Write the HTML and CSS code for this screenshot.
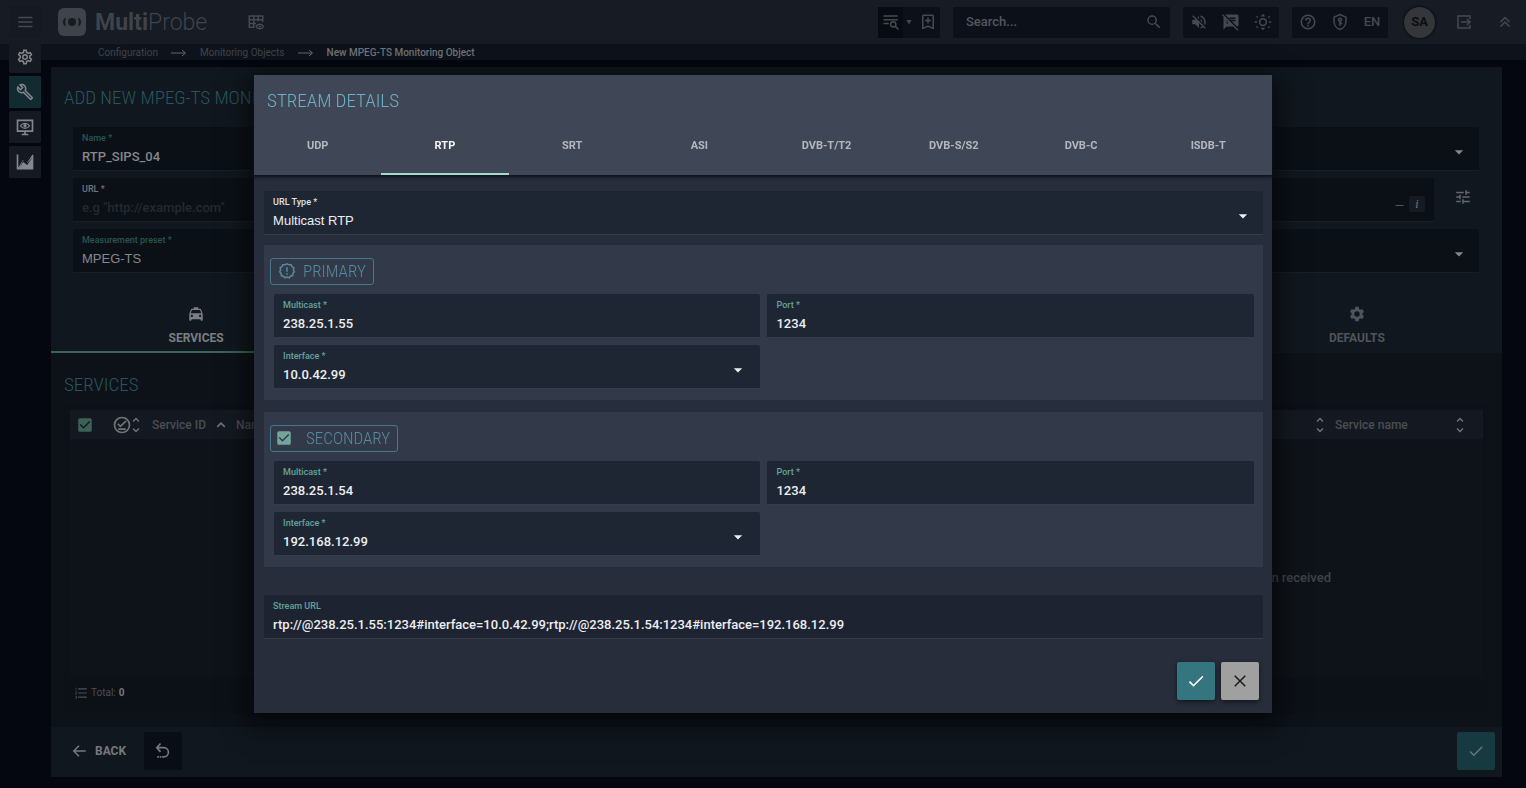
FILE: index.html
```html
<!DOCTYPE html>
<html lang="en">
<head>
<meta charset="utf-8">
<title>MultiProbe</title>
<link rel="stylesheet" href="styles.css">
</head>
<body>
<svg class="defs" aria-hidden="true">
  <symbol id="check" viewBox="0 0 24 24"><path d="M9 16.17 4.83 12l-1.42 1.41L9 19 21 7l-1.41-1.41z"/></symbol>
  <symbol id="checkbox" viewBox="0 0 24 24"><path d="M19 3H5a2 2 0 0 0-2 2v14a2 2 0 0 0 2 2h14a2 2 0 0 0 2-2V5a2 2 0 0 0-2-2zm-9 14-5-5 1.410-1.410L10 14.170l7.590-7.590L19 8l-9 9z"/></symbol>
  <symbol id="caret" viewBox="0 0 24 24"><path d="M7 10l5 5 5-5z"/></symbol>
  <symbol id="sort" viewBox="0 0 24 24"><path d="M12 4.830 15.170 8l1.410-1.410L12 2 7.410 6.590 8.830 8zM12 19.170 8.830 16l-1.410 1.410L12 22l4.590-4.590L15.170 16z"/></symbol>
  <symbol id="arrow" viewBox="0 0 16 8"><path d="M0 4h14M11 1l3.500 3L11 7" fill="none" stroke="currentColor"/></symbol>
</svg>

<header class="topbar">
  <div class="brand">
    <svg class="logo" viewBox="0 0 28 28"><rect width="28" height="28" rx="6"/><g class="logo-mark"><circle cx="14" cy="14" r="4"/><path d="M8 9.500C4 11 4 17 8 18.500C7 15.500 7 12.500 8 9.500zM20 9.500c4 1.500 4 7.500 0 9c1-3 1-6 0-9z"/></g></svg>
    <span class="brand-name"><b>Multi</b>Probe</span>
  </div>
  <button class="icon-btn layout-btn" aria-label="Table view"><svg class="i18" viewBox="0 0 24 24"><g fill="none" stroke="currentColor" stroke-width="2"><path d="M10 19H3V4h18v8M3 9h18M3 14h9M9 4v15M15 4v7"/><path d="M12 18c2-4 8-4 10 0c-2 4-8 4-10 0z"/></g><circle cx="17" cy="18" r="1.500"/></svg></button>
  <div class="tools">
    <div class="group filters">
      <button class="icon-btn dark" aria-label="Find in list"><svg class="i18" viewBox="0 0 24 24"><g fill="none" stroke="currentColor" stroke-width="2"><path d="M2 4h19M2 9h19M2 14h7"/><circle cx="15" cy="15" r="3.500"/><path d="M17.500 17.500 22 22"/></g></svg></button>
      <svg class="i14" viewBox="0 0 24 24"><path d="M7 8h10l-5 9z"/></svg>
      <button class="icon-btn" aria-label="Add bookmark"><svg class="i18" viewBox="0 0 24 24"><path d="M18 2H6a2 2 0 0 0-2 2v18l8-3.500 8 3.500V4a2 2 0 0 0-2-2zm0 17-6-2.600L6 19V4h12zM11 6h2v3h3v2h-3v3h-2v-3H8V9h3z"/></svg></button>
    </div>
    <label class="group search"><input type="text" placeholder="Search..." aria-label="Search"><svg class="i18" viewBox="0 0 24 24"><path d="M15.500 14h-.790l-.280-.270A6.470 6.470 0 0 0 16 9.500 6.500 6.500 0 1 0 9.500 16c1.610 0 3.090-.590 4.230-1.570l.270.280v.790l5 4.990L20.490 19l-4.990-5zm-6 0a4.500 4.500 0 1 1 0-9 4.500 4.500 0 0 1 0 9z"/></svg></label>
    <div class="group trio">
      <button class="icon-btn" aria-label="Mute"><svg class="i18" viewBox="0 0 24 24"><path d="M16.5 12c0-1.77-1.02-3.29-2.5-4.03v2.21l2.45 2.45c.03-.2.05-.41.05-.63zm2.5 0c0 .94-.2 1.82-.54 2.64l1.51 1.51C20.63 14.91 21 13.5 21 12c0-4.28-2.99-7.86-7-8.77v2.06c2.89.86 5 3.54 5 6.71zM4.27 3L3 4.27 7.73 9H3v6h4l5 5v-6.73l4.25 4.25c-.67.52-1.42.93-2.25 1.18v2.06c1.38-.31 2.63-.95 3.69-1.81L19.73 21 21 19.73l-9-9L4.27 3zM12 4L9.91 6.09 12 8.18V4z"/></svg></button>
      <button class="icon-btn" aria-label="Hide messages"><svg class="i18" viewBox="0 0 24 24"><path d="M10.54 11l-.54-.54L7.54 8 6 6.46 2.38 2.84 1.27 1.73 0 3l2.01 2.01L2 22l4-4h9l5.73 5.73L22 22.46 17.54 18l-7-7zM8 14H6v-2h2v2zm-2-3V9l2 2H6zm14-9H4.08L10 7.92V6h8v2h-7.92l1 1H18v2h-4.92l6.99 6.99C21.14 17.95 22 17.08 22 16V4c0-1.1-.9-2-2-2z"/></svg></button>
      <button class="icon-btn" aria-label="Brightness"><svg class="i18" viewBox="0 0 24 24"><circle cx="12" cy="12" r="4.500" fill="none" stroke="currentColor" stroke-width="2"/><path d="M9 4.500 12 1l3 3.500zM9 19.500l3 3.500 3-3.500zM2 5l3-1v3zM22 5l-3-1v3zM2 19l3 1v-3zM22 19l-3 1v-3zM1 11h3v2H1zM20 11h3v2h-3z"/></svg></button>
    </div>
    <div class="group trio">
      <button class="icon-btn" aria-label="Help"><svg class="i18" viewBox="0 0 24 24"><path d="M11 18h2v-2h-2zm1-16a10 10 0 1 0 0 20 10 10 0 0 0 0-20zm0 18a8 8 0 1 1 0-16 8 8 0 0 1 0 16zm0-14a4 4 0 0 0-4 4h2a2 2 0 1 1 4 0c0 2-3 1.750-3 5h2c0-2.250 3-2.500 3-5a4 4 0 0 0-4-4z"/></svg></button>
      <button class="icon-btn" aria-label="Security"><svg class="i18" viewBox="0 0 24 24"><g fill="none" stroke="currentColor" stroke-width="2"><path d="M12 2 4 5.500V11c0 5 3.500 9.500 8 11c4.500-1.500 8-6 8-11V5.500z"/><circle cx="12" cy="9" r="2"/><path d="M12 11v6M12 14h3"/></g></svg></button>
      <button class="icon-btn lang">EN</button>
    </div>
    <button class="avatar">SA</button>
    <button class="icon-btn" aria-label="Log out"><svg class="i18" viewBox="0 0 24 24"><g fill="none" stroke="currentColor" stroke-width="2"><path d="M20 8V4H4v16h16v-4M8 12h12M16 8l4 4-4 4"/></g></svg></button>
    <button class="icon-btn" aria-label="Collapse"><svg class="i18" viewBox="0 0 24 24"><path d="m6 12 6-6 6 6M6 18l6-6 6 6" fill="none" stroke="currentColor" stroke-width="2"/></svg></button>
  </div>
</header>

<nav class="crumbs" aria-label="Breadcrumb">
  <a href="#">Configuration</a><svg><use href="#arrow"/></svg>
  <a href="#">Monitoring Objects</a><svg><use href="#arrow"/></svg>
  <span class="current">New MPEG-TS Monitoring Object</span>
</nav>

<nav class="rail" aria-label="Main">
  <button class="menu" aria-label="Menu"><svg class="i18" viewBox="0 0 24 24"><path d="M3 5h19v2H3zM3 11h19v2H3zM3 17h19v2H3z"/></svg></button>
  <button aria-label="Settings"><svg class="i18" viewBox="0 0 24 24"><path d="M12,8A4,4 0 0,1 16,12A4,4 0 0,1 12,16A4,4 0 0,1 8,12A4,4 0 0,1 12,8M12,10A2,2 0 0,0 10,12A2,2 0 0,0 12,14A2,2 0 0,0 14,12A2,2 0 0,0 12,10M10,22C9.75,22 9.54,21.82 9.5,21.58L9.13,18.93C8.5,18.68 7.96,18.34 7.44,17.94L4.95,18.95C4.73,19.03 4.46,18.95 4.34,18.73L2.34,15.27C2.21,15.05 2.27,14.78 2.46,14.63L4.57,12.97L4.5,12L4.57,11L2.46,9.37C2.27,9.22 2.21,8.95 2.34,8.73L4.34,5.27C4.46,5.05 4.73,4.96 4.95,5.05L7.44,6.05C7.96,5.66 8.5,5.32 9.13,5.07L9.5,2.42C9.54,2.18 9.75,2 10,2H14C14.25,2 14.46,2.18 14.5,2.42L14.87,5.07C15.5,5.32 16.04,5.66 16.56,6.05L19.05,5.05C19.27,4.96 19.54,5.05 19.66,5.27L21.66,8.73C21.79,8.95 21.73,9.22 21.54,9.37L19.43,11L19.5,12L19.43,13L21.54,14.63C21.73,14.78 21.79,15.05 21.66,15.27L19.66,18.73C19.54,18.95 19.27,19.04 19.05,18.95L16.56,17.95C16.04,18.34 15.5,18.68 14.87,18.93L14.5,21.58C14.46,21.82 14.25,22 14,22H10M11.25,4L10.88,6.61C9.68,6.86 8.62,7.5 7.85,8.39L5.44,7.35L4.69,8.65L6.8,10.2C6.4,11.37 6.4,12.64 6.8,13.8L4.68,15.36L5.43,16.66L7.86,15.62C8.63,16.5 9.68,17.14 10.87,17.38L11.24,20H12.76L13.13,17.39C14.32,17.14 15.37,16.5 16.14,15.62L18.57,16.66L19.32,15.36L17.2,13.81C17.6,12.64 17.6,11.37 17.2,10.2L19.31,8.65L18.56,7.35L16.15,8.39C15.38,7.5 14.32,6.86 13.12,6.62L12.75,4H11.25Z"/></svg></button>
  <button class="active" aria-label="Configuration"><svg class="i18" viewBox="0 0 24 24"><path d="M22.61 18.99l-9.08-9.08c.93-2.34.45-5.1-1.44-7C9.79.61 6.21.4 3.66 2.26L7.5 6.11 6.08 7.52 2.25 3.69C.39 6.23.6 9.82 2.9 12.11c1.86 1.86 4.57 2.35 6.89 1.48l9.11 9.11c.39.39 1.02.39 1.41 0l2.3-2.3c.4-.38.4-1.01 0-1.41zm-3 1.6l-9.46-9.46c-.61.45-1.29.72-2 .82-1.36.2-2.79-.21-3.83-1.25C3.37 9.76 2.93 8.5 3 7.26l3.09 3.09 4.24-4.24-3.09-3.09c1.24-.07 2.49.37 3.44 1.31 1.08 1.08 1.49 2.57 1.24 3.96-.12.71-.42 1.37-.88 1.96l9.45 9.45-.88.89z"/></svg></button>
  <button aria-label="Monitoring"><svg class="i20" viewBox="0 0 24 24"><g fill="none" stroke="currentColor" stroke-width="2"><path d="M3 4h18v13H3zM12 17v4M8 21h8"/><path d="M6.500 10.500c2.500-4 8.500-4 11 0c-2.500 4-8.500 4-11 0z" stroke-width="1.500"/></g><circle cx="12" cy="10.500" r="2"/></svg></button>
  <button aria-label="Charts"><svg class="i20" viewBox="0 0 24 24"><path d="M2 3h2v15.500l5.500-9 5 3.500L21 3l1 .500V21H2z M5 19.500 9.800 12l5 3.500L20.500 7v-.500L15 13.300l-5-3.500z" fill-rule="evenodd"/></svg></button>
</nav>

<main class="panel">
  <section class="object">
    <h1>ADD NEW MPEG-TS MONI</h1>
    <div class="rows">
      <div class="row">
        <label class="field"><span>Name *</span><input type="text" value="RTP_SIPS_04"></label>
        <label class="field"><select aria-label="Group"><option></option></select><svg class="dd"><use href="#caret"/></svg></label>
      </div>
      <div class="row url-row">
        <label class="field url"><span>URL *</span><input type="text" placeholder='e.g "http://example.com"'><b class="dash">—</b><i class="info">i</i></label>
        <button class="icon-btn tune" aria-label="Stream options"><svg class="i18" viewBox="0 0 24 24"><path d="M3 17v2h6v-2H3zM3 5v2h10V5H3zm10 16v-2h8v-2h-8v-2h-2v6h2zM7 9v2H3v2h4v2h2V9H7zm14 4v-2H11v2h10zm-6-4h2V7h4V5h-4V3h-2v6z"/></svg></button>
      </div>
      <div class="row">
        <label class="field arial"><span>Measurement preset *</span><select><option>MPEG-TS</option></select></label>
        <label class="field"><select aria-label="Secondary preset"><option></option></select><svg class="dd"><use href="#caret"/></svg></label>
      </div>
    </div>
    <div class="object-tabs">
      <button class="active"><svg class="i18" viewBox="0 0 24 24"><path d="M18.92 6.01C18.72 5.42 18.16 5 17.5 5H15V3H9v2H6.500c-.66 0-1.21.42-1.42 1.01L3 12v8c0 .55.45 1 1 1h1c.55 0 1-.45 1-1v-1h12v1c0 .55.45 1 1 1h1c.55 0 1-.45 1-1v-8l-2.08-5.99zM6.5 16c-.83 0-1.5-.67-1.5-1.5S5.67 13 6.5 13s1.5.67 1.5 1.5S7.33 16 6.5 16zm11 0c-.83 0-1.5-.67-1.5-1.5s.67-1.5 1.5-1.5 1.5.67 1.5 1.5-.67 1.500-1.500 1.500zM5 11l1.500-4.500h11L19 11H5z"/></svg>SERVICES</button>
      <button class="last"><svg class="i18" viewBox="0 0 24 24"><path d="M19.14 12.94c.04-.3.06-.61.06-.94 0-.32-.02-.64-.07-.94l2.03-1.58a.49.49 0 0 0 .12-.61l-1.92-3.32a.488.488 0 0 0-.59-.22l-2.39.96c-.5-.38-1.03-.7-1.62-.94l-.36-2.54a.484.484 0 0 0-.48-.41h-3.84c-.24 0-.43.17-.47.41l-.36 2.54c-.59.24-1.13.57-1.62.94l-2.39-.96c-.22-.08-.47 0-.59.22L2.740 8.870c-.12.21-.08.47.12.61l2.030 1.580c-.05.3-.09.63-.09.94s.02.64.07.94l-2.030 1.580a.49.49 0 0 0-.12.61l1.920 3.320c.12.22.37.29.59.22l2.390-.96c.5.38 1.030.7 1.620.94l.36 2.540c.05.24.24.41.48.41h3.840c.24 0 .44-.17.47-.41l.36-2.540c.59-.24 1.130-.56 1.620-.94l2.390.96c.22.08.47 0 .59-.22l1.920-3.320c.12-.22.07-.47-.12-.61l-2.010-1.580zM12 15.600A3.600 3.600 0 1 1 12 8.400a3.600 3.600 0 0 1 0 7.200z"/></svg>DEFAULTS</button>
    </div>
  </section>

  <section class="services">
    <h2>SERVICES</h2>
    <div class="table-card">
      <table>
        <thead><tr>
          <th class="c-check"><label class="tick"><input type="checkbox" checked aria-label="Select all"><svg><use href="#checkbox"/></svg></label></th>
          <th class="c-state"><div><svg class="i20" viewBox="0 0 24 24"><g fill="none" stroke="currentColor" stroke-width="2"><circle cx="12" cy="12" r="9"/><path d="m7 10.500 3 3L17 7M7.500 17h9"/></g></svg><svg class="i18"><use href="#sort"/></svg></div></th>
          <th class="c-id"><div>Service ID<svg class="i18" viewBox="0 0 24 24"><path d="m7 14.500 5-5 5 5" fill="none" stroke="currentColor" stroke-width="2"/></svg></div></th>
          <th class="c-title"><div>Name<svg class="i18"><use href="#sort"/></svg></div></th>
          <th class="c-name"><div>Service name<svg class="i18"><use href="#sort"/></svg></div></th>
        </tr></thead>
        <tbody><tr><td colspan="5">n received</td></tr></tbody>
      </table>
      <div class="total"><svg class="i14" viewBox="0 0 24 24"><path d="M7 4h15v2H7zM7 11h15v2H7zM7 18h15v2H7zM2 3h2v5H3V4H2zM2 10h3v1l-2 3h2v1H2v-1l2-3H2zM2 17h3v5H2v-1h2v-1H3v-1h1v-1H2z"/></svg>Total: <b>0</b></div>
    </div>
  </section>

  <footer class="actions">
    <button class="back"><svg class="i18" viewBox="0 0 24 24"><path d="M21 12H5M12 5l-7 7 7 7" fill="none" stroke="currentColor" stroke-width="2"/></svg>BACK</button>
    <button class="square undo" aria-label="Undo"><svg class="i20" viewBox="0 0 24 24"><path d="M5 8h8a5.500 5.500 0 0 1 0 11h-2M9 3 4.500 8 9 13" fill="none" stroke="currentColor" stroke-width="2"/><path d="M5 18h2v2H5zM8 18h2v2H8z"/></svg></button>
    <button class="square save" aria-label="Save"><svg class="i18"><use href="#check"/></svg></button>
  </footer>
</main>

<div class="overlay">
  <form class="dialog" role="dialog" aria-labelledby="dialog-title">
    <header>
      <h2 id="dialog-title">STREAM DETAILS</h2>
      <div class="tabs">
        <button type="button">UDP</button><button type="button" class="active">RTP</button><button type="button">SRT</button><button type="button">ASI</button><button type="button">DVB-T/T2</button><button type="button">DVB-S/S2</button><button type="button">DVB-C</button><button type="button">ISDB-T</button>
      </div>
    </header>
    <div class="content">
      <label class="field arial plain"><span>URL Type *</span><select><option>Multicast RTP</option></select><svg class="dd"><use href="#caret"/></svg></label>
      <section class="source">
        <h3><svg class="i18" viewBox="0 0 24 24"><path d="m12 2.500 3 1.300 2.500-.2 1.200 2.700 2.400 1.500-.6 2.900 1.300 2.300-2 2.200-.2 2.900-2.900.8-1.800 2.100-2.900-1-2.900 1-1.800-2.100-2.900-.8-.2-2.900-2-2.200 1.300-2.300-.6-2.900 2.400-1.500 1.200-2.700 2.500.2z" fill="none" stroke="currentColor" stroke-width="2"/><path d="M11 7h2v6h-2zM11 15h2v2h-2z"/></svg>PRIMARY</h3>
        <div class="grid">
          <label class="field"><span>Multicast *</span><input type="text" value="238.25.1.55"></label>
          <label class="field"><span>Port *</span><input type="text" value="1234"></label>
          <label class="field"><span>Interface *</span><select><option>10.0.42.99</option></select><svg class="dd"><use href="#caret"/></svg></label>
        </div>
      </section>
      <section class="source">
        <h3><label class="tick bright"><input type="checkbox" checked><svg><use href="#checkbox"/></svg>SECONDARY</label></h3>
        <div class="grid">
          <label class="field"><span>Multicast *</span><input type="text" value="238.25.1.54"></label>
          <label class="field"><span>Port *</span><input type="text" value="1234"></label>
          <label class="field"><span>Interface *</span><select><option>192.168.12.99</option></select><svg class="dd"><use href="#caret"/></svg></label>
        </div>
      </section>
      <label class="field stream"><span>Stream URL</span><input type="text" value="rtp://@238.25.1.55:1234#interface=10.0.42.99;rtp://@238.25.1.54:1234#interface=192.168.12.99"></label>
      <div class="dialog-actions">
        <button type="submit" class="square ok" aria-label="Apply"><svg class="i20"><use href="#check"/></svg></button>
        <button type="button" class="square cancel" aria-label="Cancel"><svg class="i18" viewBox="0 0 24 24"><path d="m5 5 14 14M19 5 5 19" fill="none" stroke="currentColor" stroke-width="2"/></svg></button>
      </div>
    </div>
  </form>
</div>
</body>
</html>
```
FILE: styles.css
```css
* { box-sizing: border-box; }
body {
  margin: 0;
  min-height: 100vh;
  display: flex;
  flex-direction: column;
  background: #04070f;
  color: #75787e;
  font: 500 13px/18px Roboto, sans-serif;
}
.defs { position: absolute; width: 0; height: 0; }
svg { fill: currentColor; flex: none; display: block; }
.i14 { width: 14px; height: 14px; }
.i18 { width: 18px; height: 18px; }
.i20 { width: 20px; height: 20px; }
button { border: 0; padding: 0; background: none; color: inherit; font: inherit; display: flex; align-items: center; justify-content: center; }
input, select { border: 0; padding: 0; margin: 0; background: none; color: inherit; font: inherit; outline: 0; appearance: none; min-width: 0; }
h1, h2, h3 { margin: 0; font: 300 19px/24px "Roboto Condensed", "Liberation Sans Narrow", Roboto, sans-serif; }

/* Top bar */
.topbar { display: flex; align-items: center; height: 44px; padding: 0 12px 0 58px; background: #161b24; color: #464950; }
.brand { display: flex; align-items: center; gap: 9px; color: #3f434a; }
.logo { width: 28px; height: 28px; }
.logo-mark { fill: #161b24; }
.brand-name { padding-top: 2px; font-size: 23px; line-height: 28px; font-weight: 300; }
.brand-name b { font-weight: 700; }
.layout-btn { margin-left: 33px; }
.tools { display: flex; align-items: center; margin-left: auto; gap: 13px; }
.group { display: flex; align-items: center; height: 31px; background: #0c1119; border-radius: 2px; }
.icon-btn { width: 32px; height: 31px; }
.dark { background: #070b12; }
.filters .icon-btn { width: 25px; }
.filters .i14 { width: 12px; }
.search { width: 217px; padding: 0 7px 0 13px; justify-content: space-between; }
.search input { flex: 1; }
.search input::placeholder { color: #54575d; opacity: 1; }
.lang { font-size: 13px; }
.avatar { width: 31px; height: 31px; margin-left: 3px; border-radius: 50%; background: #34363a; color: #0b0d11; font-weight: 700; box-shadow: 0 0 3px #000; }
.tools > .icon-btn:last-child { width: 18px; margin-left: 3px; }

.crumbs { display: flex; align-items: center; height: 16px; padding: 2px 0 0 98px; background: #0e131b; font-size: 10px; line-height: 14px; font-weight: 400; color: #3f4349; gap: 13px; }
.crumbs a { color: inherit; text-decoration: none; }
.crumbs svg { width: 16px; height: 8px; color: #63666b; }
.crumbs .current { color: #707277; font-weight: 500; }

/* Navigation rail floats over the bars */
.rail { position: absolute; top: 6px; left: 9px; display: flex; flex-direction: column; gap: 3px; }
.rail button { width: 32px; height: 32px; background: #151922; color: #85878c; border-radius: 1px; }
.rail .menu { color: #464950; }
.rail .active { background: #112b31; }

/* Page panel */
.panel { flex: 1; display: flex; flex-direction: column; margin: 7px 24px 11px 51px; background: #0d1219; }
.object { background: #10171e; }
h1, .services h2 { color: #2a5560; padding-left: 13px; }
h1 { padding-top: 19px; }
.rows { display: flex; flex-direction: column; gap: 7px; padding: 17px 23px 0 22px; }
.row { display: grid; grid-template-columns: 1fr 1fr; gap: 16px; }
.url-row { grid-template-columns: 1fr 32px; gap: 13px; align-items: start; }
.field { position: relative; display: flex; flex-direction: column; gap: 1px; height: 44px; padding: 5px 9px 3px; background: #0b1017; border-bottom: 1px solid #181e26; color: #85878b; border-radius: 2px 2px 0 0; }
.field span { font-size: 9px; line-height: 13px; font-weight: 500; color: #285751; }
.field input, .field select { flex: 1; width: 100%; height: 20px; }
.field input::placeholder { color: #242930; opacity: 1; }
.arial select { font-family: "Liberation Sans", Arial, sans-serif; font-weight: 400; }
.dd { position: absolute; right: 10px; top: 15px; width: 20px; height: 20px; pointer-events: none; }
.url span { color: #74767b; }
.dash { position: absolute; right: 30px; top: 19px; font-weight: 400; font-size: 12px; color: #55585e; }
.info { position: absolute; right: 9px; top: 18px; width: 16px; height: 16px; text-align: center; font: italic 12px/16px "Liberation Serif", serif; background: #161b23; border-radius: 2px; color: #777a7f; }
.tune { height: 38px; color: #64676c; }
.object-tabs { display: grid; grid-template-columns: repeat(5, 1fr); height: 66px; margin-top: 14px; }
.object-tabs button { flex-direction: column; gap: 6px; padding-top: 14px; font-size: 12px; font-weight: 700; color: #505358; border-bottom: 2px solid transparent; }
.object-tabs .active { color: #7c7e82; border-color: #386650; }
.object-tabs .last { grid-column: 5; }

.services { flex: 1; display: flex; flex-direction: column; padding: 20px 13px 13px; }
.services h2 { padding-left: 0; }
.table-card { flex: 1; display: flex; flex-direction: column; margin-top: 7px; padding: 6px 6px 0; background: #0c1017; }
table { flex: 1; display: table; width: 100%; height: 267px; border-collapse: collapse; table-layout: fixed; background: #0e1319; }
thead tr { height: 29px; background: #141921; }
th { padding: 0; text-align: left; font-size: 12px; font-weight: 500; color: #4a4d53; }
th div { display: flex; align-items: center; justify-content: space-between; }
th svg { color: #717378; }
.c-check { width: 42px; }
.c-state { width: 40px; }
.c-state div { justify-content: flex-start; }
.c-state .i20 + .i18 { margin-left: -5px; }
.c-id { width: 84px; }
.c-name { width: 148px; }
.c-id div, .c-title div { padding-right: 6px; }
.c-name div { padding-right: 14px; }
td { padding: 40px 152px 0 0; text-align: right; font-weight: 500; color: #404349; }
.tick { display: flex; align-items: center; position: relative; padding-left: 6px; }
.tick input { position: absolute; width: 18px; height: 18px; opacity: 0; }
.tick svg { width: 18px; height: 18px; color: #3c6157; }
.total { display: flex; align-items: center; gap: 3px; height: 37px; padding: 0 4px 6px; font-size: 10px; font-weight: 400; color: #4c4f55; }
.total b { color: #75787c; font-weight: 700; }

.actions { display: flex; align-items: center; height: 50px; padding: 0 7px 2px 19px; background: #10171e; }
.back { gap: 7px; font-size: 12px; font-weight: 700; }
.square { width: 38px; height: 38px; border-radius: 2px; }
.undo { margin-left: 18px; background: #090d15; }
.save { margin-left: auto; background: #173940; color: #66777b; }

/* Dialog */
.overlay { position: fixed; inset: 0; display: flex; align-items: center; justify-content: center; }
.dialog { width: 66.7%; background: #272d3a; box-shadow: 0 8px 24px 6px rgba(0, 0, 0, .6); color: #eceef2; }
.dialog header { background: #3f4757; box-shadow: 0 1px 3px 1px #0c111c; }
.dialog h2 { padding: 14px 13px 2px; color: #6cb2c4; }
.tabs { display: grid; grid-template-columns: repeat(8, 1fr); height: 60px; }
.tabs button { padding-top: 2px; font-size: 11px; font-weight: 700; color: #b4b7bf; border-bottom: 2px solid transparent; border-top: 2px solid transparent; }
.tabs .active { color: #f4f5f7; border-bottom-color: #a3d8cd; }
.content { padding: 16px 9px 13px 10px; }
.dialog .field { background: #1e2634; border-color: #343d4b; color: #eceef2; }
.dialog .field span { color: #64a59a; }
.dialog .plain span { color: #dfe1e6; }
.source { height: 155px; margin-top: 10px; padding: 13px 9px 11px 6px; background: #323a4a; }
.source + .source { margin-top: 12px; }
.source h3 { display: flex; align-items: center; gap: 7px; width: max-content; height: 27px; padding: 0 7px 2px; border: 1px solid #44788a; border-radius: 3px; color: #558b9c; font-size: 17px; }
.source h3:has(.bright) { padding-left: 4px; }
.grid { display: grid; grid-template-columns: 1fr 1fr; gap: 7px; padding: 9px 0 0 4px; }
.grid .dd { right: 12px; }
.bright { gap: 13px; padding: 0; }
.bright svg { color: #74a59c; }
.dialog .stream { margin-top: 28px; background: #1d2331; }
.dialog-actions { display: flex; justify-content: flex-end; gap: 6px; margin-top: 23px; padding-right: 4px; }
.ok { background: #34757f; color: #fff; box-shadow: 0 2px 5px rgba(0, 0, 0, .5); }
.cancel { background: #a0a0a0; color: #1b1b1b; box-shadow: 0 2px 5px rgba(0, 0, 0, .5); }
```
